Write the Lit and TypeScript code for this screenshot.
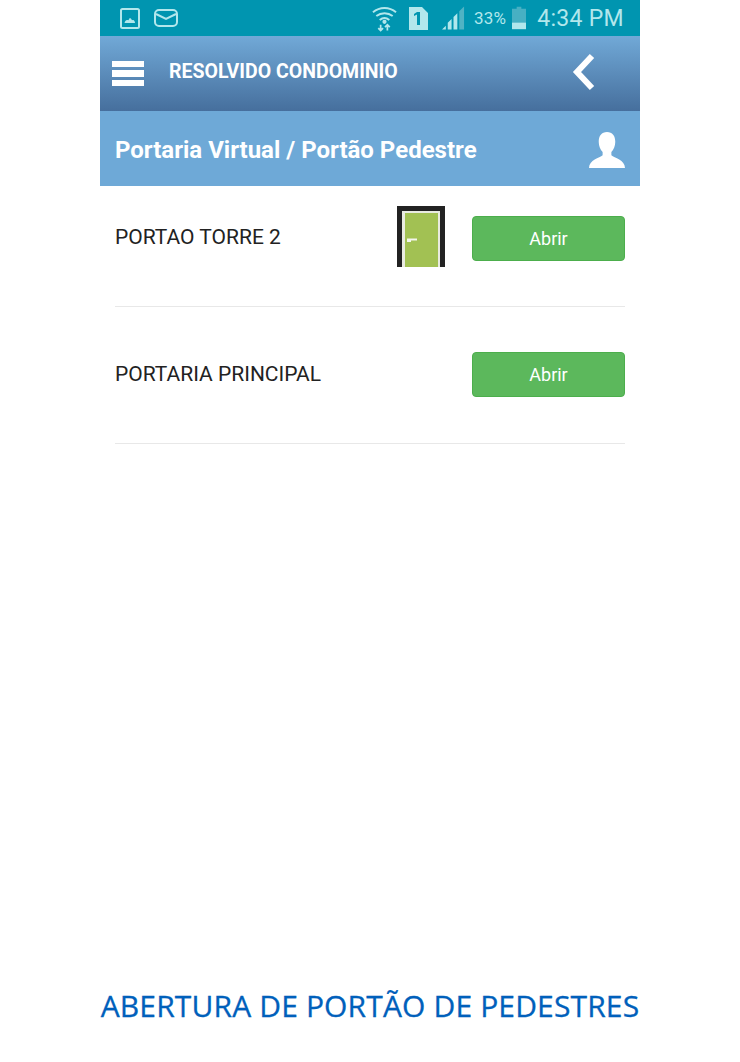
import { LitElement, html, css, svg } from "lit";
import { customElement } from "lit/decorators.js";

const door = svg`<svg width="48" height="61" viewBox="0 0 48 61"><path d="M2.500 61V2.500h45.500" fill="none" stroke="#222" stroke-width="5"/><path d="M45.500 2.500V61" fill="none" stroke="#222" stroke-width="5"/><rect x="5" y="5" width="38" height="56" fill="#e9ebe0"/><rect x="8" y="7" width="33" height="54" fill="#a2c153"/><path d="M10 32.500h10v2h-6v1.500h-4z" fill="#f4f6ee"/></svg>`;

@customElement("app-root")
export class AppRoot extends LitElement {
  static styles = css`
    :host { display: block; width: 740px; height: 1062px; background: #fff; font-family: Roboto, "Liberation Sans", sans-serif; overflow: hidden; }
    .phone { width: 540px; margin-left: 100px; height: 970px; }
    .status { height: 36px; background: #0095b0; display: flex; align-items: center; padding: 0 16px 0 20px; color: #b2e7ec; box-sizing: border-box; }
    .status svg { display: block; flex: none; }
    .mail { margin-left: 14px; }
    .wifi { margin-left: auto; }
    .sim { margin-left: 12px; }
    .signal { margin-left: 14px; }
    .pct { font-size: 17px; margin-left: 9px; letter-spacing: 0.2px; }
    .batt { margin-left: 6px; }
    .time { font-size: 23px; margin-left: 11px; letter-spacing: 0.3px; }
    .head { height: 75px; background: linear-gradient(#71a9d7, #466f9d); display: flex; align-items: center; padding: 0 44px 4px 12px; box-sizing: border-box; color: #fff; }
    .head .title { font-size: 19.500px; font-weight: 700; margin-left: 25px; flex: 1; }
    .burger { display: flex; flex-direction: column; gap: 3px; width: 32px; margin-top: 4px; }
    .burger i { display: block; height: 6.500px; background: #fff; }
    .sub { height: 75px; background: #6ea9d7; display: flex; align-items: center; justify-content: space-between; padding: 2px 15px 0 15px; box-sizing: border-box; color: #fff; font-size: 24px; font-weight: 700; }
    .row { height: 120px; margin: 0 15px; border-bottom: 1px solid #e8e8e8; display: flex; align-items: flex-start; }
    .row + .row { height: 136px; }
    .name { font-size: 21px; color: #222; margin-top: 38px; flex: 1; line-height: 26px; }
    .row + .row .name { margin-top: 54px; }
    .door { margin: 20px 27px 0 0; }
    .door svg { display: block; }
    button { width: 153px; height: 45px; margin-top: 30px; background: #5cb85c; border: 1px solid #4cae4c; border-radius: 4px; color: #fff; font: 400 18px Roboto, "Liberation Sans", sans-serif; padding: 0; }
    .row + .row button { margin-top: 45px; }
    .caption { text-align: center; width: 540px; margin-left: 100px; color: #0060bb; font: 400 30px/40px "Open Sans", "Noto Sans", sans-serif; letter-spacing: 0.15px; white-space: nowrap; margin-top: 16px; -webkit-text-stroke: 0.3px #0060bb; }
  `;

  render() {
    return html`
      <div class="phone">
        <div class="status">
          <svg width="20" height="21" viewBox="0 0 20 21"><rect x="1" y="1" width="18" height="19" rx="1.500" fill="none" stroke="currentColor" stroke-width="2"/><path d="M4.500 15c.5-2 1.500-3 2.500-3s1 .5 1.500 0 1-2 1.500-2 1.500 1.500 2 2 1-.500 2 .5 1 2.500 1 2.500z" fill="currentColor"/></svg>
          <svg class="mail" width="24" height="18" viewBox="0 0 24 18"><rect x="1" y="1" width="22" height="16" rx="4" fill="none" stroke="currentColor" stroke-width="2"/><path d="M2 5l10 5 10-5" fill="none" stroke="currentColor" stroke-width="2"/></svg>
          <svg class="wifi" width="25" height="27" viewBox="0 0 26 27" fill="none" stroke="currentColor" stroke-width="2"><path d="M1 7c7-6 17-6 24 0M4.500 11c5-4 12-4 17 0M8 15c3-2.500 7-2.500 10 0"/><circle cx="13" cy="17" r="1.200" fill="currentColor"/><path d="M9 20v6M6.500 23.500L9 26l2.500-2.500M16 26v-6M13.500 22.500L16 20l2.500 2.500" stroke-width="1.800"/></svg>
          <svg class="sim" width="19" height="23" viewBox="0 0 19 23"><path fill-rule="evenodd" d="M0 0h13l6 6v17H0zM8 5L5 7v2l3-1.500V18h3V5z" fill="currentColor"/></svg>
          <svg class="signal" width="23" height="24" viewBox="0 0 24 24"><path d="M0 24l4-4v4zM6 24v-7l4-4v11z" fill="currentColor"/><path d="M12 24V11l4-4v17z" fill="currentColor"/><path d="M18 24V5l5-5v24z" fill="#4fb3c4"/></svg>
          <span class="pct">33%</span>
          <svg class="batt" width="14" height="24" viewBox="0 0 15 24"><path d="M5 0h5v2h5v16H0V2h5z" fill="#47b0c3"/><rect y="17" width="15" height="7" fill="currentColor"/></svg>
          <span class="time">4:34 PM</span>
        </div>
        <div class="head">
          <div class="burger"><i></i><i></i><i></i></div>
          <div class="title">RESOLVIDO CONDOMINIO</div>
          <svg width="24" height="38" viewBox="0 0 24 38"><path d="M20 3L5 19l15 16" fill="none" stroke="#fff" stroke-width="6"/></svg>
        </div>
        <div class="sub">
          <span>Portaria Virtual / Portão Pedestre</span>
          <svg width="36" height="36" viewBox="0 0 37 37"><path d="M18.500 0c5.500 0 8.500 4 8.500 10 0 4-1.500 8-4 10.500V24c3 2.500 14 5 14 13H0c0-8 11-10.500 14-13v-3.500C11.500 18 10 14 10 10 10 4 13 0 18.500 0z" fill="#fff"/></svg>
        </div>
        <div class="row">
          <div class="name">PORTAO TORRE 2</div>
          <div class="door">${door}</div>
          <button>Abrir</button>
        </div>
        <div class="row">
          <div class="name">PORTARIA PRINCIPAL</div>
          <button>Abrir</button>
        </div>
      </div>
      <div class="caption">ABERTURA DE PORTÃO DE PEDESTRES</div>
    `;
  }
}
